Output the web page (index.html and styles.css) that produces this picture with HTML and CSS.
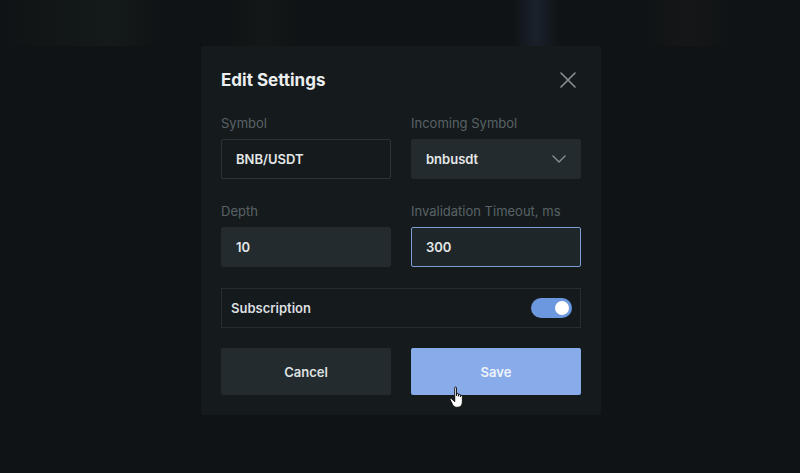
FILE: index.html
```html
<!DOCTYPE html>
<html lang="en">
<head>
    <meta charset="UTF-8">
    <meta name="viewport" content="width=device-width, initial-scale=1.0">
    <title>Edit Settings</title>
    <link rel="stylesheet" href="styles.css">
</head>
<body>

    <div class="backdrop">
        <div class="modal">
            <div class="modal-header">
                <h2>Edit Settings</h2>
                <button class="close-btn" aria-label="Close">
                    <svg width="18" height="18" viewBox="0 0 18 18">
                        <path d="M2 2 L16 16 M16 2 L2 16" stroke="#8a9194" stroke-width="1.6" stroke-linecap="round" fill="none"/>
                    </svg>
                </button>
            </div>

            <div class="fields">
                <div class="field">
                    <label>Symbol</label>
                    <div class="input outline">BNB/USDT</div>
                </div>
                <div class="field">
                    <label>Incoming Symbol</label>
                    <div class="input select">
                        <span>bnbusdt</span>
                        <svg width="14" height="8" viewBox="0 0 14 8">
                            <path d="M1 1 L7 7 L13 1" stroke="#8a9194" stroke-width="1.4" fill="none" stroke-linecap="round" stroke-linejoin="round"/>
                        </svg>
                    </div>
                </div>
                <div class="field">
                    <label>Depth</label>
                    <div class="input">10</div>
                </div>
                <div class="field">
                    <label>Invalidation Timeout, ms</label>
                    <div class="input focused">300</div>
                </div>
            </div>

            <div class="switch-row">
                <span>Subscription</span>
                <div class="toggle"><div class="knob"></div></div>
            </div>

            <div class="actions">
                <button class="btn cancel">Cancel</button>
                <button class="btn save">
                    Save
                    <svg class="cursor" width="18" height="24" viewBox="0 0 16 22">
                        <path d="M5 1.5 C5 0.7 6.6 0.7 6.6 1.5 L6.6 9 L6.8 7.4 C6.8 6.6 8.4 6.6 8.4 7.4 L8.4 9.4 L8.6 8.2 C8.6 7.4 10.2 7.4 10.2 8.2 L10.2 10 L10.4 9.2 C10.4 8.4 12 8.4 12 9.2 L12 14.5 C12 17.5 10.5 19.5 8 19.5 L6.5 19.5 C5 19.5 4 18.6 3 17 L0.8 12.6 C0.4 11.8 1.4 11 2.2 11.8 L5 14.4 Z" fill="#ffffff" stroke="#111" stroke-width="0.9" stroke-linejoin="round"/>
                    </svg>
                </button>
            </div>
        </div>
    </div>

</body>
</html>
```

FILE: styles.css
```css
body {
    margin: 0;
    font-family: Inter, "Noto Sans", Arial, sans-serif;
    background-color: #0f1315;
    color: #e4e7e8;
}

.backdrop {
    height: 473px;
    display: flex;
    justify-content: center;
    align-items: flex-start;
    padding-top: 46px;
    box-sizing: border-box;
    background:
        linear-gradient(90deg,
            transparent 0%, rgba(30, 38, 34, 0.35) 14%, transparent 20%,
            transparent 28%, rgba(30, 34, 30, 0.3) 33%, transparent 38%,
            transparent 64%, rgba(40, 50, 70, 0.45) 67%, transparent 70%,
            transparent 80%, rgba(35, 30, 28, 0.3) 86%, transparent 92%) top / 100% 46px no-repeat,
        #0f1315;
}

.modal {
    width: 400px;
    margin-left: 2px;
    box-sizing: border-box;
    padding: 20px;
    background-color: #151b1d;
    border-radius: 2px;
}

.modal-header {
    display: flex;
    justify-content: space-between;
    align-items: center;
    height: 27px;
    margin-bottom: 22px;
}

.modal-header h2 {
    margin: 0;
    font-size: 17px;
    font-weight: 700;
    color: #eceeef;
}

.close-btn {
    background: none;
    border: none;
    padding: 0;
    margin-right: 4px;
    cursor: pointer;
    display: flex;
}

.fields {
    display: grid;
    grid-template-columns: 1fr 1fr;
    column-gap: 20px;
    row-gap: 24px;
}

.field label {
    display: block;
    font-size: 13px;
    line-height: 16px;
    color: #596266;
    margin-bottom: 8px;
}

.input {
    height: 40px;
    box-sizing: border-box;
    padding: 0 14px;
    display: flex;
    align-items: center;
    font-size: 13px;
    font-weight: 600;
    color: #e4e7e8;
    background-color: #242b2e;
    border: 1px solid #242b2e;
    border-radius: 2px;
}

.input.outline {
    background-color: transparent;
    border-color: #2b3336;
}

.input.select {
    justify-content: space-between;
}

.input.focused {
    background-color: #1e262a;
    border-color: #7d9fd3;
}

.switch-row {
    margin-top: 21px;
    height: 40px;
    box-sizing: border-box;
    border: 1px solid #262d30;
    padding: 0 8px 0 9px;
    display: flex;
    justify-content: space-between;
    align-items: center;
    font-size: 13px;
    font-weight: 600;
    color: #dcdfe0;
}

.toggle {
    width: 41px;
    height: 20px;
    border-radius: 10px;
    background-color: #6c98df;
    display: flex;
    align-items: center;
    justify-content: flex-end;
    padding: 0 3px;
    box-sizing: border-box;
}

.knob {
    width: 14px;
    height: 14px;
    border-radius: 50%;
    background-color: #ffffff;
}

.actions {
    margin-top: 20px;
    display: grid;
    grid-template-columns: 1fr 1fr;
    gap: 20px;
}

.btn {
    height: 47px;
    border: none;
    border-radius: 2px;
    font-family: inherit;
    font-size: 13px;
    font-weight: 600;
    cursor: pointer;
}

.cancel {
    background-color: #242b2e;
    color: #dfe2e3;
}

.save {
    position: relative;
    background-color: #88acea;
    color: #eef3fb;
}

.cursor {
    position: absolute;
    left: 38px;
    top: 38px;
}
```
